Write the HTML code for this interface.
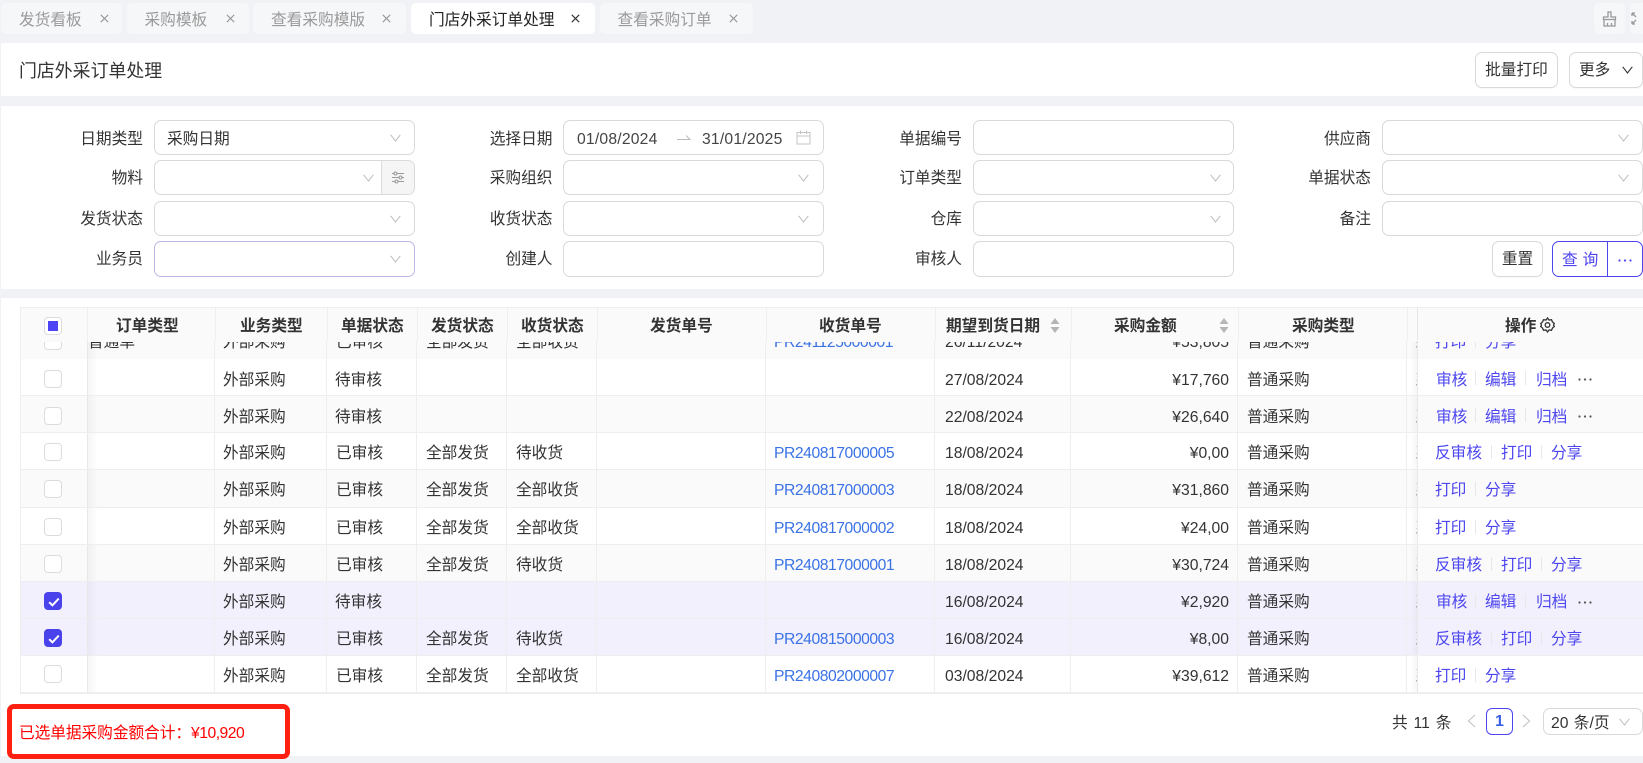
<!DOCTYPE html>
<html lang="zh"><head><meta charset="utf-8"><title>门店外采订单处理</title>
<style>
html,body{margin:0;padding:0}
body{width:1643px;height:763px;overflow:hidden;background:#f0f2f5;position:relative;font-family:"Liberation Sans","Noto Sans CJK SC",sans-serif;font-size:15.7px;color:#333}
div,span,svg{box-sizing:border-box}
.p{position:absolute}
.t{position:absolute;height:20px;line-height:20px;white-space:nowrap}
.tab{position:absolute;top:3px;height:31px;background:#f6f7f9;border-radius:5px}
.tab.on{background:#fff}
.tt{top:8px;color:#9a9a9a}
.tab.on .tt{color:#222}
.x{position:absolute;top:11px;width:9px;height:9px}
.w{position:absolute;background:#fff}
.l{width:100px;text-align:right;color:#333}
.i{position:absolute;background:#fff;border:1px solid #d9d9d9;border-radius:7px}
.c{position:absolute;width:11px;height:8px}
.b{position:absolute;background:#fff;border:1px solid #d9d9d9;border-radius:7px;text-align:center;line-height:36px;color:#333;box-shadow:0 1px 1px rgba(0,0,0,.03)}
.h{position:absolute;top:9px;height:20px;line-height:20px;font-weight:700;color:#333;white-space:nowrap;text-align:center;font-size:15.7px}
.hv{position:absolute;top:0;width:1px;height:35px;background:#efefef}
.r{position:absolute;left:0;width:1623px;border-bottom:1px solid #eee;background:#fff;height:37px}
.alt{background:#fafafa}
.sel{background:#f2f0fd}
.fl{position:absolute;left:0;top:0;bottom:0;width:68px;background:inherit;border-left:1px solid #eee;border-right:1px solid #e8e8e8;z-index:3}
.fl:after{content:"";position:absolute;left:67px;top:0;bottom:0;width:10px;background:linear-gradient(to right,rgba(0,0,0,.035),rgba(0,0,0,0))}
.fr{position:absolute;left:1397px;top:0;bottom:0;width:226px;background:inherit;border-left:1px solid #e8e8e8;z-index:3}
.fr:before{content:"";position:absolute;left:-8px;width:7px;top:0;bottom:0;background:linear-gradient(to left,rgba(0,0,0,.03),rgba(0,0,0,0))}
.ck{position:absolute;left:24px;top:10px;width:18px;height:18px;border:1px solid #dcdcdc;border-radius:4px;background:#fff;z-index:4}
.ck.on{background:#4a43ec;border-color:#4a43ec}
.ck svg{position:absolute;left:3px;top:4px}
.d{top:11px}
.u .d{top:12px}
.u .ck{top:11px}
.o{color:#4d46ef}
.k{color:#3a72e6;letter-spacing:-.45px}
.s{position:absolute;top:12px;width:1px;height:14px;background:#e8e8e8;z-index:4}
.f{z-index:4}
.v{position:absolute;top:0;width:1px;height:352px;background:#eee;z-index:2}
.dots{position:absolute;top:19px;z-index:4}
.am{right:414px;text-align:right}
</style></head><body>
<svg width="0" height="0" style="position:absolute"><defs>
<symbol id="ch" viewBox="0 0 11 8"><path d="M.7.8 5.5 7 10.3.8" fill="none" stroke="#bdbdbd" stroke-width="1"/></symbol>
<symbol id="xx" viewBox="0 0 9 9"><path d="M.8.8 8.2 8.2M8.2.8.8 8.2" fill="none" stroke="currentColor" stroke-width="1.1"/></symbol>
<symbol id="dd" viewBox="0 0 14 3"><circle cx="1.5" cy="1.5" r="1.1" fill="currentColor"/><circle cx="7" cy="1.5" r="1.1" fill="currentColor"/><circle cx="12.5" cy="1.5" r="1.1" fill="currentColor"/></symbol>
<symbol id="tk" viewBox="0 0 12 10"><path d="M1.2 5.2 4.4 8.3 10.8 1.6" fill="none" stroke="#fff" stroke-width="2"/></symbol>
</defs></svg>

<div class="tab" style="left:1px;width:121px"><span class="t tt" style="left:18px">发货看板</span><svg class="x" style="left:99px;color:#999"><use href="#xx"/></svg></div>
<div class="tab" style="left:127px;width:122px"><span class="t tt" style="left:17.5px">采购模板</span><svg class="x" style="left:99px;color:#999"><use href="#xx"/></svg></div>
<div class="tab" style="left:253px;width:153px"><span class="t tt" style="left:18px">查看采购模版</span><svg class="x" style="left:129px;color:#999"><use href="#xx"/></svg></div>
<div class="tab on" style="left:411px;width:184px"><span class="t tt" style="left:18px">门店外采订单处理</span><svg class="x" style="left:160px;color:#333"><use href="#xx"/></svg></div>
<div class="tab" style="left:600px;width:153px"><span class="t tt" style="left:17.5px">查看采购订单</span><svg class="x" style="left:129px;color:#999"><use href="#xx"/></svg></div>
<div class="tab" style="left:1594px;width:31px"><svg class="p" style="left:8px;top:8px" width="15" height="16" viewBox="0 0 15 16" fill="none" stroke="#999" stroke-width="1.3"><path d="M6 1h3v5h4.500v2.500h-12V6H6zM2 8.500V15h11V8.500M5.500 15v-3M9.500 15v-3"/></svg></div>
<div class="tab" style="left:1630px;width:20px"><svg class="p" style="left:1px;top:9px" width="13" height="13" viewBox="0 0 13 13" fill="none" stroke="#999" stroke-width="1.3"><path d="M1 1l4 4M1 1h3M1 1v3M1 12l4-4M1 12h3M1 12V9"/></svg></div>

<div class="w" style="left:1px;top:43px;width:1642px;height:53px"></div>
<div class="t" style="left:19px;top:61px;font-size:17.9px;color:#333">门店外采订单处理</div>
<div class="b" style="left:1475px;top:52px;width:83px;height:36px">批量打印</div>
<div class="b" style="left:1569px;top:52px;width:74px;height:36px;text-align:left;padding-left:9px">更多<svg class="c" style="left:52px;top:13px"><path d="M.7.8 5.500 7 10.300.8" fill="none" stroke="#333" stroke-width="1.100"/></svg></div>

<div class="w" style="left:1px;top:106px;width:1642px;height:183px"></div>

<div class="t l" style="left:43px;top:130px">日期类型</div>
<div class="i" style="left:154px;top:120px;width:261px;height:35px"></div>
<div class="t" style="left:167px;top:130px">采购日期</div>
<svg class="c" style="left:390px;top:134px"><use href="#ch"/></svg>

<div class="t l" style="left:43px;top:169px">物料</div>
<div class="i" style="left:154px;top:160px;width:261px;height:35px;overflow:hidden"><div class="p" style="left:226px;top:0;width:34px;height:33px;background:#f5f5f5;border-left:1px solid #dcdcdc"></div></div>
<svg class="c" style="left:363px;top:174px"><use href="#ch"/></svg>
<svg class="p" style="left:391px;top:171px" width="14" height="13" viewBox="0 0 14 13" fill="none" stroke="#999" stroke-width="1"><path d="M1 2.500h2M6 2.500h7M1 6.500h7M11 6.500h2M1 10.500h3M7 10.500h6"/><circle cx="4.500" cy="2.500" r="1.500"/><circle cx="9.500" cy="6.500" r="1.500"/><circle cx="5.500" cy="10.500" r="1.500"/></svg>

<div class="t l" style="left:43px;top:210px">发货状态</div>
<div class="i" style="left:154px;top:201px;width:261px;height:35px"></div>
<svg class="c" style="left:390px;top:215px"><use href="#ch"/></svg>

<div class="t l" style="left:43px;top:250px">业务员</div>
<div class="i" style="left:154px;top:241px;width:261px;height:36px;border-color:#bcb8e6"></div>
<svg class="c" style="left:390px;top:255px"><use href="#ch"/></svg>

<div class="t l" style="left:452.5px;top:130px">选择日期</div>
<div class="i" style="left:563px;top:120px;width:261px;height:35px"></div>
<div class="t" style="left:577px;top:130px;color:#444;letter-spacing:.2px">01/08/2024</div>
<svg class="p" style="left:677px;top:134px" width="14" height="8" viewBox="0 0 14 8" fill="none" stroke="#bbb" stroke-width="1"><path d="M0 5.500h13L9 1.500"/></svg>
<div class="t" style="left:702px;top:130px;color:#444;letter-spacing:.2px">31/01/2025</div>
<svg class="p" style="left:796px;top:130px" width="15" height="15" viewBox="0 0 15 15" fill="none" stroke="#c4c4c4" stroke-width="1"><path d="M1 2.500h13v11.500H1zM1 6h13M4.500.5v3.500M10.500.5v3.500"/></svg>

<div class="t l" style="left:452.5px;top:169px">采购组织</div>
<div class="i" style="left:563px;top:160px;width:261px;height:35px"></div>
<svg class="c" style="left:798px;top:174px"><use href="#ch"/></svg>

<div class="t l" style="left:452.5px;top:210px">收货状态</div>
<div class="i" style="left:563px;top:201px;width:261px;height:35px"></div>
<svg class="c" style="left:798px;top:215px"><use href="#ch"/></svg>

<div class="t l" style="left:452.5px;top:250px">创建人</div>
<div class="i" style="left:563px;top:241px;width:261px;height:36px"></div>

<div class="t l" style="left:862px;top:130px">单据编号</div>
<div class="i" style="left:973px;top:120px;width:261px;height:35px"></div>
<div class="t l" style="left:862px;top:169px">订单类型</div>
<div class="i" style="left:973px;top:160px;width:261px;height:35px"></div>
<svg class="c" style="left:1210px;top:174px"><use href="#ch"/></svg>
<div class="t l" style="left:862px;top:210px">仓库</div>
<div class="i" style="left:973px;top:201px;width:261px;height:35px"></div>
<svg class="c" style="left:1210px;top:215px"><use href="#ch"/></svg>
<div class="t l" style="left:862px;top:250px">审核人</div>
<div class="i" style="left:973px;top:241px;width:261px;height:36px"></div>

<div class="t l" style="left:1271px;top:130px">供应商</div>
<div class="i" style="left:1382px;top:120px;width:261px;height:35px"></div>
<svg class="c" style="left:1618px;top:134px"><use href="#ch"/></svg>
<div class="t l" style="left:1271px;top:169px">单据状态</div>
<div class="i" style="left:1382px;top:160px;width:261px;height:35px"></div>
<svg class="c" style="left:1618px;top:174px"><use href="#ch"/></svg>
<div class="t l" style="left:1271px;top:210px">备注</div>
<div class="i" style="left:1382px;top:201px;width:261px;height:35px"></div>

<div class="b" style="left:1492px;top:241px;width:51px;height:36px">重置</div>
<div class="p" style="left:1552px;top:241px;width:91px;height:36px;border:1px solid #4d46ef;border-radius:7px;background:#fff"><div class="p" style="left:54px;top:0;width:1px;height:34px;background:#4d46ef"></div></div>
<div class="t" style="left:1562px;top:251px;color:#4d46ef;letter-spacing:5px">查询</div>
<svg class="p" style="left:1618px;top:259px;color:#4d46ef" width="14" height="3"><use href="#dd"/></svg>

<div class="w" style="left:1px;top:298px;width:1642px;height:458px"></div>

<div class="p" style="left:20px;top:307px;width:1623px;height:36px;background:#fafafa;border:1px solid #eee;border-right:0">
<div class="hv" style="left:66px"></div><div class="hv" style="left:194px"></div><div class="hv" style="left:306px"></div><div class="hv" style="left:396px"></div><div class="hv" style="left:486px"></div><div class="hv" style="left:576px"></div><div class="hv" style="left:745px"></div><div class="hv" style="left:914px"></div><div class="hv" style="left:1050px"></div><div class="hv" style="left:1217px"></div><div class="hv" style="left:1386px"></div><div class="hv" style="left:1396px;background:#e6e6e6"></div>
<div class="ck" style="left:23px;top:9px;width:18px;height:18px"><div class="p" style="left:3px;top:3px;width:10px;height:10px;background:#4d45f5"></div></div>
<div class="h" style="left:95px">订单类型</div>
<div class="h" style="left:219px">业务类型</div>
<div class="h" style="left:320px">单据状态</div>
<div class="h" style="left:410px">发货状态</div>
<div class="h" style="left:500px">收货状态</div>
<div class="h" style="left:629px">发货单号</div>
<div class="h" style="left:798px">收货单号</div>
<div class="h" style="left:925px">期望到货日期</div>
<div class="h" style="left:1093px">采购金额</div>
<div class="h" style="left:1271px">采购类型</div>
<div class="h" style="left:1484px">操作</div>
<svg class="p" style="left:1029px;top:9px" width="10" height="18" viewBox="0 0 10 18" fill="#b5b5b5"><path d="M5 1 9.500 7h-9zM.5 10h9L5 16z"/></svg>
<svg class="p" style="left:1198px;top:9px" width="10" height="18" viewBox="0 0 10 18" fill="#b5b5b5"><path d="M5 1 9.500 7h-9zM.5 10h9L5 16z"/></svg>
<svg class="p" style="left:1519px;top:9px" width="15" height="16" viewBox="0 0 15 16" fill="none" stroke="#333" stroke-width="1.300"><path d="M7.500 1 9 3l2.500-.3 1 2.300 1.800 1.500-.8 1.500.8 1.500-1.800 1.500-1 2.300L9 13l-1.500 2L6 13l-2.500.3-1-2.300L.7 9.500 1.500 8 .7 6.500 2.500 5l1-2.300L6 3z"/><circle cx="7.500" cy="8" r="2.300"/></svg>
</div>

<div class="p" style="left:20px;top:342px;width:1623px;height:352px;overflow:hidden;border-bottom:2px solid #eee">
<div class="v" style="left:194px"></div><div class="v" style="left:306px"></div><div class="v" style="left:396px"></div><div class="v" style="left:486px"></div><div class="v" style="left:576px"></div><div class="v" style="left:745px"></div><div class="v" style="left:914px"></div><div class="v" style="left:1050px"></div><div class="v" style="left:1217px"></div><div class="v" style="left:1386px"></div>

<div class="r alt" style="top:-20px;height:38px"><div class="fl"></div><div class="ck"></div>
<span class="t d f" style="left:68px;z-index:4">普通单</span><span class="t d" style="left:203px">外部采购</span><span class="t d" style="left:316px">已审核</span><span class="t d" style="left:406px">全部发货</span><span class="t d" style="left:496px">全部收货</span><span class="t d k" style="left:754px">PR241125000001</span><span class="t d" style="left:925px">26/11/2024</span><span class="t d am">¥53,805</span><span class="t d" style="left:1227px">普通采购</span><span class="t d" style="left:1395px">系统</span><div class="fr"></div>
<span class="t d o f" style="left:1415px">打印</span><i class="s" style="left:1455px"></i><span class="t d o f" style="left:1465px">分享</span></div>

<div class="r u" style="top:17px"><div class="fl"></div><div class="ck"></div>
<span class="t d" style="left:203px">外部采购</span><span class="t d" style="left:315px">待审核</span><span class="t d" style="left:925px">27/08/2024</span><span class="t d am">¥17,760</span><span class="t d" style="left:1227px">普通采购</span><span class="t d" style="left:1395px">系统</span><div class="fr"></div>
<span class="t d o f" style="left:1416px">审核</span><i class="s" style="left:1455px"></i><span class="t d o f" style="left:1465px">编辑</span><i class="s" style="left:1505px"></i><span class="t d o f" style="left:1516px">归档</span><svg class="dots" style="left:1558px;color:#555" width="14" height="3"><use href="#dd"/></svg></div>

<div class="r alt u" style="top:54px"><div class="fl"></div><div class="ck"></div>
<span class="t d" style="left:203px">外部采购</span><span class="t d" style="left:315px">待审核</span><span class="t d" style="left:925px">22/08/2024</span><span class="t d am">¥26,640</span><span class="t d" style="left:1227px">普通采购</span><span class="t d" style="left:1395px">系统</span><div class="fr"></div>
<span class="t d o f" style="left:1416px">审核</span><i class="s" style="left:1455px"></i><span class="t d o f" style="left:1465px">编辑</span><i class="s" style="left:1505px"></i><span class="t d o f" style="left:1516px">归档</span><svg class="dots" style="left:1558px;color:#555" width="14" height="3"><use href="#dd"/></svg></div>

<div class="r" style="top:91px"><div class="fl"></div><div class="ck"></div>
<span class="t d" style="left:203px">外部采购</span><span class="t d" style="left:316px">已审核</span><span class="t d" style="left:406px">全部发货</span><span class="t d" style="left:496px">待收货</span><span class="t d k" style="left:754px">PR240817000005</span><span class="t d" style="left:925px">18/08/2024</span><span class="t d am">¥0,00</span><span class="t d" style="left:1227px">普通采购</span><span class="t d" style="left:1395px">系统</span><div class="fr"></div>
<span class="t d o f" style="left:1415px">反审核</span><i class="s" style="left:1471px"></i><span class="t d o f" style="left:1481px">打印</span><i class="s" style="left:1521px"></i><span class="t d o f" style="left:1531px">分享</span></div>

<div class="r alt" style="top:128px;height:38px"><div class="fl"></div><div class="ck"></div>
<span class="t d" style="left:203px">外部采购</span><span class="t d" style="left:316px">已审核</span><span class="t d" style="left:406px">全部发货</span><span class="t d" style="left:496px">全部收货</span><span class="t d k" style="left:754px">PR240817000003</span><span class="t d" style="left:925px">18/08/2024</span><span class="t d am">¥31,860</span><span class="t d" style="left:1227px">普通采购</span><span class="t d" style="left:1395px">系统</span><div class="fr"></div>
<span class="t d o f" style="left:1415px">打印</span><i class="s" style="left:1455px"></i><span class="t d o f" style="left:1465px">分享</span></div>

<div class="r" style="top:166px"><div class="fl"></div><div class="ck"></div>
<span class="t d" style="left:203px">外部采购</span><span class="t d" style="left:316px">已审核</span><span class="t d" style="left:406px">全部发货</span><span class="t d" style="left:496px">全部收货</span><span class="t d k" style="left:754px">PR240817000002</span><span class="t d" style="left:925px">18/08/2024</span><span class="t d am">¥24,00</span><span class="t d" style="left:1227px">普通采购</span><span class="t d" style="left:1395px">系统</span><div class="fr"></div>
<span class="t d o f" style="left:1415px">打印</span><i class="s" style="left:1455px"></i><span class="t d o f" style="left:1465px">分享</span></div>

<div class="r alt" style="top:203px"><div class="fl"></div><div class="ck"></div>
<span class="t d" style="left:203px">外部采购</span><span class="t d" style="left:316px">已审核</span><span class="t d" style="left:406px">全部发货</span><span class="t d" style="left:496px">待收货</span><span class="t d k" style="left:754px">PR240817000001</span><span class="t d" style="left:925px">18/08/2024</span><span class="t d am">¥30,724</span><span class="t d" style="left:1227px">普通采购</span><span class="t d" style="left:1395px">系统</span><div class="fr"></div>
<span class="t d o f" style="left:1415px">反审核</span><i class="s" style="left:1471px"></i><span class="t d o f" style="left:1481px">打印</span><i class="s" style="left:1521px"></i><span class="t d o f" style="left:1531px">分享</span></div>

<div class="r sel" style="top:240px"><div class="fl"></div><div class="ck on"><svg width="12" height="10"><use href="#tk"/></svg></div>
<span class="t d" style="left:203px">外部采购</span><span class="t d" style="left:315px">待审核</span><span class="t d" style="left:925px">16/08/2024</span><span class="t d am">¥2,920</span><span class="t d" style="left:1227px">普通采购</span><span class="t d" style="left:1395px">系统</span><div class="fr"></div>
<span class="t d o f" style="left:1416px">审核</span><i class="s" style="left:1455px"></i><span class="t d o f" style="left:1465px">编辑</span><i class="s" style="left:1505px"></i><span class="t d o f" style="left:1516px">归档</span><svg class="dots" style="left:1558px;color:#555" width="14" height="3"><use href="#dd"/></svg></div>

<div class="r sel" style="top:277px"><div class="fl"></div><div class="ck on"><svg width="12" height="10"><use href="#tk"/></svg></div>
<span class="t d" style="left:203px">外部采购</span><span class="t d" style="left:316px">已审核</span><span class="t d" style="left:406px">全部发货</span><span class="t d" style="left:496px">待收货</span><span class="t d k" style="left:754px">PR240815000003</span><span class="t d" style="left:925px">16/08/2024</span><span class="t d am">¥8,00</span><span class="t d" style="left:1227px">普通采购</span><span class="t d" style="left:1395px">系统</span><div class="fr"></div>
<span class="t d o f" style="left:1415px">反审核</span><i class="s" style="left:1471px"></i><span class="t d o f" style="left:1481px">打印</span><i class="s" style="left:1521px"></i><span class="t d o f" style="left:1531px">分享</span></div>

<div class="r" style="top:314px"><div class="fl"></div><div class="ck" style="top:9px"></div>
<span class="t d" style="left:203px">外部采购</span><span class="t d" style="left:316px">已审核</span><span class="t d" style="left:406px">全部发货</span><span class="t d" style="left:496px">全部收货</span><span class="t d k" style="left:754px">PR240802000007</span><span class="t d" style="left:925px">03/08/2024</span><span class="t d am">¥39,612</span><span class="t d" style="left:1227px">普通采购</span><span class="t d" style="left:1395px">系统</span><div class="fr"></div>
<span class="t d o f" style="left:1415px">打印</span><i class="s" style="left:1455px"></i><span class="t d o f" style="left:1465px">分享</span></div>
</div>

<div class="p" style="left:7px;top:704px;width:283px;height:55px;border:5.500px solid #ff2012;border-radius:7px;background:#fff"></div>
<div class="t" style="left:19px;top:724px;color:#ff0000;letter-spacing:-.05px">已选单据采购金额合计：<span style="letter-spacing:-.5px">¥10,920</span></div>

<div class="t" style="left:1392px;top:714px;color:#333;word-spacing:1.500px">共 11 条</div>
<svg class="p" style="left:1467px;top:714px" width="9" height="14" viewBox="0 0 9 14" fill="none" stroke="#c4c4c4" stroke-width="1.100"><path d="M8 1 1.500 7 8 13"/></svg>
<div class="p" style="left:1486px;top:708px;width:27px;height:27px;border:1px solid #4d46ef;border-radius:6px;text-align:center;line-height:25px;color:#3a5fe6;font-weight:700;background:#fff">1</div>
<svg class="p" style="left:1522px;top:714px" width="9" height="14" viewBox="0 0 9 14" fill="none" stroke="#c4c4c4" stroke-width="1.100"><path d="M1 1l6.500 6L1 13"/></svg>
<div class="i" style="left:1543px;top:708px;width:100px;height:27px"></div>
<div class="t" style="left:1551px;top:714px;word-spacing:1px">20 条/页</div>
<svg class="c" style="left:1619px;top:718px"><use href="#ch"/></svg>
</body></html>
